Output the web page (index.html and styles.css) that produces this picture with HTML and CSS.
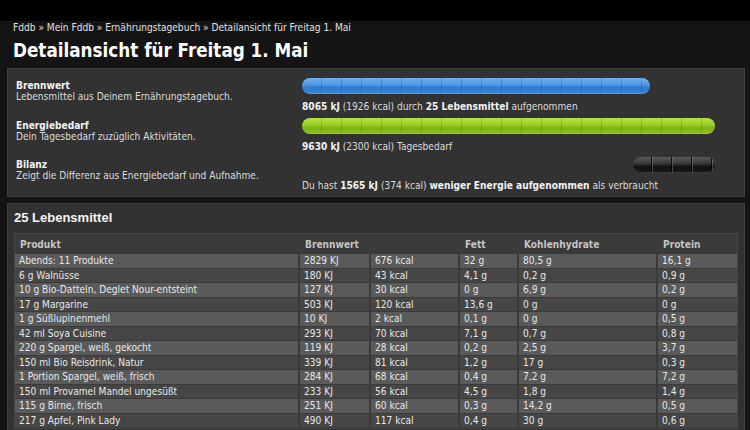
FILE: index.html
```html
<!DOCTYPE html>
<html lang="de">
<head>
<meta charset="utf-8">
<title>Detailansicht für Freitag 1. Mai</title>
<link rel="stylesheet" href="styles.css">
</head>
<body>
<div class="topbar"></div>
<div class="main">
  <div class="crumbs">Fddb » Mein Fddb » Ernährungstagebuch » Detailansicht für Freitag 1. Mai</div>
  <h1 class="title">Detailansicht für Freitag 1. Mai</h1>

  <section class="panel summary">
    <div class="info">
      <div class="label">Brennwert</div>
      <div class="desc">Lebensmittel aus Deinem Ernährungstagebuch.</div>
    </div>
    <div class="meter">
      <div class="track"><div class="bar blue" style="width:348px"></div></div>
      <div class="mtext"><b>8065 kJ</b> (1926 kcal) durch <b>25 Lebensmittel</b> aufgenommen</div>
    </div>

    <div class="info">
      <div class="label">Energiebedarf</div>
      <div class="desc">Dein Tagesbedarf zuzüglich Aktivitäten.</div>
    </div>
    <div class="meter">
      <div class="track"><div class="bar green" style="width:413px"></div></div>
      <div class="mtext"><b>9630 kJ</b> (2300 kcal) Tagesbedarf</div>
    </div>

    <div class="info">
      <div class="label">Bilanz</div>
      <div class="desc">Zeigt die Differenz aus Energiebedarf und Aufnahme.</div>
    </div>
    <div class="meter">
      <div class="track right"><div class="bar black" style="width:82px"></div></div>
      <div class="mtext">Du hast <b>1565 kJ</b> (374 kcal) <b>weniger Energie aufgenommen</b> als verbraucht</div>
    </div>
  </section>

  <section class="panel foods">
    <h2 class="count">25 Lebensmittel</h2>
    <table class="list">
      <colgroup>
        <col class="c-prod"><col class="c-kj"><col class="c-kcal"><col class="c-fett"><col class="c-kh"><col class="c-prot">
      </colgroup>
      <thead>
        <tr><th>Produkt</th><th colspan="2">Brennwert</th><th>Fett</th><th>Kohlenhydrate</th><th>Protein</th></tr>
      </thead>
      <tbody>
        <tr><td>Abends: 11 Produkte</td><td>2829 KJ</td><td>676 kcal</td><td>32 g</td><td>80,5 g</td><td>16,1 g</td></tr>
        <tr><td>6 g Walnüsse</td><td>180 KJ</td><td>43 kcal</td><td>4,1 g</td><td>0,2 g</td><td>0,9 g</td></tr>
        <tr><td>10 g Bio-Datteln, Deglet Nour-entsteint</td><td>127 KJ</td><td>30 kcal</td><td>0 g</td><td>6,9 g</td><td>0,2 g</td></tr>
        <tr><td>17 g Margarine</td><td>503 KJ</td><td>120 kcal</td><td>13,6 g</td><td>0 g</td><td>0 g</td></tr>
        <tr><td>1 g Süßlupinenmehl</td><td>10 KJ</td><td>2 kcal</td><td>0,1 g</td><td>0 g</td><td>0,5 g</td></tr>
        <tr><td>42 ml Soya Cuisine</td><td>293 KJ</td><td>70 kcal</td><td>7,1 g</td><td>0,7 g</td><td>0,8 g</td></tr>
        <tr><td>220 g Spargel, weiß, gekocht</td><td>119 KJ</td><td>28 kcal</td><td>0,2 g</td><td>2,5 g</td><td>3,7 g</td></tr>
        <tr><td>150 ml Bio Reisdrink, Natur</td><td>339 KJ</td><td>81 kcal</td><td>1,2 g</td><td>17 g</td><td>0,3 g</td></tr>
        <tr><td>1 Portion Spargel, weiß, frisch</td><td>284 KJ</td><td>68 kcal</td><td>0,4 g</td><td>7,2 g</td><td>7,2 g</td></tr>
        <tr><td>150 ml Provamel Mandel ungesüßt</td><td>233 KJ</td><td>56 kcal</td><td>4,5 g</td><td>1,8 g</td><td>1,4 g</td></tr>
        <tr><td>115 g Birne, frisch</td><td>251 KJ</td><td>60 kcal</td><td>0,3 g</td><td>14,2 g</td><td>0,5 g</td></tr>
        <tr><td>217 g Apfel, Pink Lady</td><td>490 KJ</td><td>117 kcal</td><td>0,4 g</td><td>30 g</td><td>0,6 g</td></tr>
      </tbody>
    </table>
  </section>
</div>
</body>
</html>
```
FILE: styles.css
```css
html, body {
  margin: 0;
  padding: 0;
}
body {
  width: 750px;
  height: 430px;
  overflow: hidden;
  background: #141414;
  color: #dcdcdc;
  font-family: "DejaVu Sans Condensed", "DejaVu Sans", sans-serif;
  font-size: 10.1px;
}
.topbar {
  height: 21px;
  background: #000;
}
.main {
  padding: 0 5px 0 7px;
}
.crumbs {
  padding-left: 6px;
  height: 13px;
  line-height: 13px;
  color: #e0e0e0;
}
.title {
  margin: 5px 0 5px 6px;
  font-size: 18.7px;
  line-height: 24px;
  font-weight: bold;
  color: #fff;
}
.panel {
  background: #323232;
  border: 1px solid #3e3e3e;
}
.summary {
  display: grid;
  grid-template-columns: 286px 1fr;
  grid-template-rows: 40px 39px 39px;
  padding: 9px 0 0 8px;
}
.info {
  padding-top: 2px;
  line-height: 11px;
}
.label {
  font-weight: bold;
  color: #f2f2f2;
}
.desc {
  color: #dcdcdc;
}
.track {
  width: 413px;
  height: 16px;
  display: flex;
}
.track.right {
  justify-content: flex-end;
}
.bar {
  height: 16px;
  border-radius: 8px;
  box-shadow: inset 0 -1px 0 rgba(255,255,255,0.15);
}
.bar.blue {
  background:
    repeating-linear-gradient(90deg, transparent 0 19px, rgba(0,40,110,0.22) 19px 20px),
    linear-gradient(#73b2f0, #4a95e2 45%, #2f7bd2 60%, #3b86d8);
}
.bar.green {
  background:
    repeating-linear-gradient(90deg, transparent 0 19px, rgba(60,90,0,0.25) 19px 20px),
    linear-gradient(#b8e448, #98cc22 45%, #7fb416 60%, #8cc01c);
}
.bar.black {
  background:
    repeating-linear-gradient(90deg, transparent 0 18px, rgba(0,0,0,0.8) 18px 19px, rgba(120,120,120,0.5) 19px 20px),
    linear-gradient(#5a5a5a, #3a3a3a 40%, #111 60%, #1a1a1a);
}
.mtext {
  margin-top: 7px;
  line-height: 12px;
  color: #dcdcdc;
}
.mtext b {
  color: #f2f2f2;
}
.foods {
  margin-top: 6px;
  padding: 5px 6px 0 6px;
  height: 240px;
}
.count {
  margin: 0 0 7px 0;
  font-family: "Liberation Sans", Arial, sans-serif;
  font-size: 13px;
  line-height: 17px;
  font-weight: bold;
  color: #f4f4f4;
}
.list {
  border-collapse: separate;
  border-spacing: 0;
  table-layout: fixed;
  width: 724px;
  border: 1px solid #464646;
  background: #3a3a3a;
}
.c-prod { width: 285px; }
.c-kj { width: 71px; }
.c-kcal { width: 89px; }
.c-fett { width: 59px; }
.c-kh { width: 139px; }
.c-prot { width: 79px; }
.list th {
  height: 20px;
  padding: 0 0 0 5px;
  text-align: left;
  font-weight: bold;
  color: #c4c4c4;
  background: #3a3a3a;
}
.list td {
  padding: 0 0 0 4px;
  line-height: 13.5px;
  height: 13.5px;
  white-space: nowrap;
  overflow: hidden;
  border-right: 2px solid #3a3a3a;
  border-bottom: 1px solid #3a3a3a;
  color: #e8e8e8;
  background: #464646;
}
.list td:last-child {
  border-right: 0;
}
.list tbody tr:nth-child(odd) td {
  background: #5a5a5a;
}
```
